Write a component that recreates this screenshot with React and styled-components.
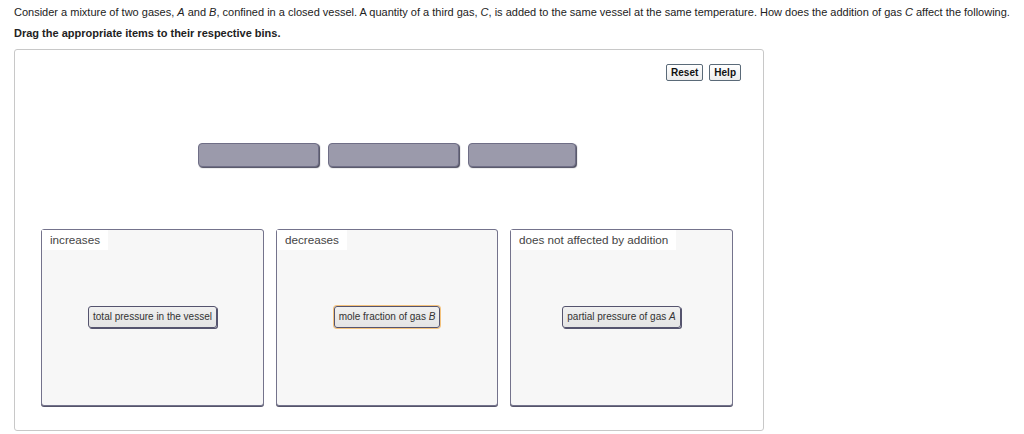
import styled, { createGlobalStyle } from 'styled-components'

const Global = createGlobalStyle`
	body {
		margin: 0;
		background: #fff;
		font-family: "Liberation Sans", Arial, sans-serif;
		color: #222;
	}
`

const Page = styled.div`
	padding: 6px 14px 0;
	width: 1024px;
	box-sizing: border-box;
`
const Prompt = styled.p`
	margin: 0;
	font-size: 11px;
	line-height: 13px;
	color: #222;
`
const Instruction = styled.p`
	margin: 8px 0 0;
	font-size: 11px;
	line-height: 13px;
	font-weight: bold;
	color: #222;
`
const Board = styled.div`
	margin-top: 9px;
	width: 750px;
	height: 382px;
	box-sizing: border-box;
	border: 1px solid #c8c8c8;
	border-radius: 3px;
	padding: 14px 22px 0 26px;
	display: flex;
	flex-direction: column;
`
const Toolbar = styled.div`
	display: flex;
	justify-content: flex-end;
	gap: 6px;
`
const ToolButton = styled.button`
	font-family: "Liberation Sans", Arial, sans-serif;
	font-size: 10px;
	font-weight: bold;
	color: #111;
	height: 17px;
	padding: 0 4px;
	border: 1px solid #5a6a78;
	border-radius: 2px;
	background: linear-gradient(#ffffff, #ececec);
	cursor: pointer;
`
const Slots = styled.div`
	margin-top: 62px;
	display: flex;
	gap: 9px;
	padding-left: 157px;
`
const Slot = styled.div`
	width: ${p => p.$w}px;
	height: 24px;
	box-sizing: border-box;
	background: #9b9aab;
	border: 1px solid #6f6e86;
	border-radius: 4px;
	box-shadow: 1px 1px 1px #4a4a5c;
`
const Bins = styled.div`
	margin-top: 62px;
	display: flex;
	gap: 12px;
`
const Bin = styled.div`
	width: ${p => p.$w}px;
	height: 177px;
	box-sizing: border-box;
	background: #f7f7f7;
	border: 1px solid #74738c;
	border-radius: 3px;
	box-shadow: 0 1px 0 #55546a;
	display: flex;
	flex-direction: column;
	align-items: flex-start;
`
const BinLabel = styled.div`
	background: #fff;
	font-size: 11.7px;
	color: #444;
	height: 20px;
	line-height: 20px;
	padding: 0 8px;
`
const BinBody = styled.div`
	flex: 1;
	align-self: stretch;
	display: flex;
	align-items: center;
	justify-content: center;
	padding-bottom: 22px;
`
const Item = styled.div`
	height: 22px;
	box-sizing: border-box;
	line-height: 20px;
	padding: 0 4px;
	font-size: 10px;
	color: #333;
	background: linear-gradient(#f0f0f0, #e4e4e4);
	border: 1px solid #55546e;
	border-radius: 3px;
	box-shadow: ${p => (p.$active ? '0 0 0 1px #f4c27c' : '1px 1px 0 #55546e')};
	white-space: nowrap;
`

const bins = [
	{ label: 'increases', w: 223, item: <>total pressure in the vessel</> },
	{ label: 'decreases', w: 222, item: <>mole fraction of gas <i>B</i></>, active: true },
	{ label: 'does not affected by addition', w: 223, item: <>partial pressure of gas <i>A</i></> },
]

const App = () => {
	return (
		<Page>
			<Global />
			<Prompt>
				Consider a mixture of two gases, <i>A</i> and <i>B</i>, confined in a closed vessel. A quantity of a third gas, <i>C</i>, is added to the same vessel at the same temperature. How does the addition of gas <i>C</i> affect the following.
			</Prompt>
			<Instruction>Drag the appropriate items to their respective bins.</Instruction>
			<Board>
				<Toolbar>
					<ToolButton>Reset</ToolButton>
					<ToolButton>Help</ToolButton>
				</Toolbar>
				<Slots>
					<Slot $w={121} />
					<Slot $w={131} />
					<Slot $w={108} />
				</Slots>
				<Bins>
					{bins.map(b => (
						<Bin key={b.label} $w={b.w}>
							<BinLabel>{b.label}</BinLabel>
							<BinBody>
								<Item $active={b.active}>{b.item}</Item>
							</BinBody>
						</Bin>
					))}
				</Bins>
			</Board>
		</Page>
	)
}

export default App
